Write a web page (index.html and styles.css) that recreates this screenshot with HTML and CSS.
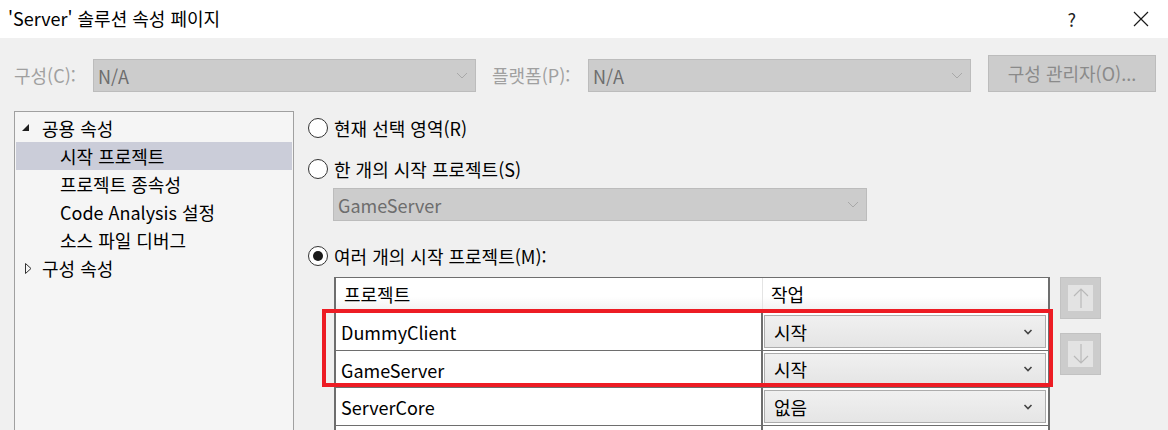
FILE: index.html
```html
<!DOCTYPE html>
<html lang="ko">
<head>
<meta charset="utf-8">
<title>'Server' 솔루션 속성 페이지</title>
<link rel="stylesheet" href="styles.css">
</head>
<body>
<div class="window">
  <div class="titlebar">
    <span class="title">'Server' 솔루션 속성 페이지</span>
    <span class="help">?</span>
    <span class="close"><svg width="16" height="16" viewBox="0 0 16 16"><path d="M1 1 L15 15 M15 1 L1 15" stroke="#1a1a1a" stroke-width="1.2" fill="none"/></svg></span>
  </div>
  <div class="body">
    <div class="configrow">
      <span class="lbl lbl-cfg">구성(C):</span>
      <div class="combo disabled wide"><span>N/A</span><svg class="chev" width="12" height="7" viewBox="0 0 12 7"><path d="M1 1 L6 6 L11 1" stroke="#a8a8a8" fill="none" stroke-width="1"/></svg></div>
      <span class="lbl lbl-plat">플랫폼(P):</span>
      <div class="combo disabled wide"><span>N/A</span><svg class="chev" width="12" height="7" viewBox="0 0 12 7"><path d="M1 1 L6 6 L11 1" stroke="#a8a8a8" fill="none" stroke-width="1"/></svg></div>
      <div class="btn disabled">구성 관리자(O)...</div>
    </div>
    <div class="content">
      <div class="tree">
        <div class="node"><span class="exp"><svg width="8" height="8" viewBox="0 0 8 8"><path d="M7 0 L7 7 L0 7 Z" fill="#1e1e1e"/></svg></span>공용 속성</div>
        <div class="node child sel">시작 프로젝트</div>
        <div class="node child">프로젝트 종속성</div>
        <div class="node child">Code Analysis 설정</div>
        <div class="node child">소스 파일 디버그</div>
        <div class="node"><span class="exp col"><svg width="7" height="11" viewBox="0 0 7 11"><path d="M0.5 0.5 L6 5.5 L0.5 10.5 Z" fill="none" stroke="#333" stroke-width="1"/></svg></span>구성 속성</div>
      </div>
      <div class="main">
        <label class="radio r1"><span class="circle"></span>현재 선택 영역(R)</label>
        <label class="radio r2"><span class="circle"></span>한 개의 시작 프로젝트(S)</label>
        <div class="combo disabled single"><span>GameServer</span><svg class="chev" width="12" height="7" viewBox="0 0 12 7"><path d="M1 1 L6 6 L11 1" stroke="#a8a8a8" fill="none" stroke-width="1"/></svg></div>
        <label class="radio r3"><span class="circle on"></span>여러 개의 시작 프로젝트(M):</label>
        <div class="tablewrap">
          <div class="grid">
            <div class="hdr c1">프로젝트</div>
            <div class="hdr c2">작업</div>
            <div class="cell c1">DummyClient</div>
            <div class="cell c2"><div class="dd">시작<svg class="chev" width="10" height="6" viewBox="0 0 10 6"><path d="M1.5 1 L5 4.5 L8.5 1" stroke="#444" fill="none" stroke-width="1.6"/></svg></div></div>
            <div class="cell c1">GameServer</div>
            <div class="cell c2"><div class="dd">시작<svg class="chev" width="10" height="6" viewBox="0 0 10 6"><path d="M1.5 1 L5 4.5 L8.5 1" stroke="#444" fill="none" stroke-width="1.6"/></svg></div></div>
            <div class="cell c1">ServerCore</div>
            <div class="cell c2"><div class="dd">없음<svg class="chev" width="10" height="6" viewBox="0 0 10 6"><path d="M1.5 1 L5 4.5 L8.5 1" stroke="#444" fill="none" stroke-width="1.6"/></svg></div></div>
            <div class="cell c1 empty"></div>
            <div class="cell c2 empty"></div>
            <div class="highlight"></div>
          </div>
          <div class="arrows">
            <div class="abtn"><span class="ainner"><svg width="16" height="22" viewBox="0 0 16 22"><path d="M8 2 L8 21 M1 9 L8 2 L15 9" stroke="#b9b9b9" fill="none" stroke-width="1.2"/></svg></span></div>
            <div class="abtn"><span class="ainner"><svg width="16" height="22" viewBox="0 0 16 22"><path d="M8 1 L8 20 M1 13 L8 20 L15 13" stroke="#b9b9b9" fill="none" stroke-width="1.2"/></svg></span></div>
          </div>
        </div>
      </div>
    </div>
  </div>
</div>
</body>
</html>
```
FILE: styles.css
```css
* { box-sizing: border-box; }
html, body { margin: 0; padding: 0; }
body {
  width: 1168px;
  height: 430px;
  overflow: hidden;
  background: #f0f0f0;
  font-family: "Noto Sans CJK KR", "Noto Sans", sans-serif;
  font-size: 18px;
  color: #000;
}
.window { width: 1168px; height: 430px; display: flex; flex-direction: column; overflow: hidden; }
.titlebar {
  flex: none;
  height: 38px;
  background: #fff;
  display: flex;
  align-items: center;
  padding-left: 8px;
}
.title { font-size: 18px; line-height: 24px; color: #000; margin-top: -2px; }
.help { margin-left: auto; font-size: 18px; color: #222; line-height: 20px; margin-right: 57px; }
.close { margin-right: 19px; display: flex; margin-top: -1px; }

.body { flex: 1; display: flex; flex-direction: column; min-height: 0; }
.configrow {
  flex: none;
  display: flex;
  align-items: flex-end;
  padding-left: 14px;
  margin-top: 17px;
  height: 37px;
}
.lbl { color: #a0a0a0; line-height: 33px; height: 33px; }
.lbl-cfg { width: 79px; }
.lbl-plat { width: 96px; margin-left: 16px; }
.combo {
  display: flex;
  align-items: center;
  height: 33px;
  background: #cccccc;
  border: 1px solid #bcbcbc;
  color: #6d6d6d;
  padding-left: 4px;
  padding-right: 7px;
  line-height: 20px;
}
.combo span { flex: 1; }
.combo.wide { width: 383px; }
.btn {
  margin-left: 17px;
  width: 168px;
  height: 37px;
  background: #cccccc;
  border: 1px solid #bcbcbc;
  color: #8a8a8a;
  display: flex;
  align-items: center;
  justify-content: center;
  padding-bottom: 1px;
}

.content { flex: none; display: flex; margin-top: 19px; height: 400px; }
.tree {
  width: 280px;
  margin-left: 14px;
  background: #f5f5f5;
  border: 1px solid #a0a0a0;
  border-bottom: none;
  padding: 2px 1px 0 1px;
  height: 400px;
}
.node {
  height: 28px;
  line-height: 28px;
  display: flex;
  align-items: center;
  padding-left: 26px;
  position: relative;
  white-space: nowrap;
}
.node.child { padding-left: 44px; }
.node.sel { background: #cbcdd9; }
.exp { position: absolute; left: 6px; top: 10px; display: flex; }
.exp.col { left: 9px; top: 9px; }

.main { flex: 1; padding-left: 14px; }
.radio {
  display: flex;
  align-items: center;
  height: 28px;
  line-height: 28px;
}
.radio.r1 { margin-top: 3px; }
.radio.r2 { margin-top: 13px; }
.radio.r3 { margin-top: 21px; }
.circle {
  width: 20px; height: 20px;
  border: 1px solid #333;
  border-radius: 50%;
  background: #fff;
  margin-right: 6px;
  position: relative;
  flex: none;
}
.circle.on::after {
  content: "";
  position: absolute;
  left: 4px; top: 4px;
  width: 10px; height: 10px;
  border-radius: 50%;
  background: #1a1a1a;
}
.combo.single { width: 534px; margin-left: 25px; margin-top: 5px; }

.tablewrap { display: flex; margin-left: 26px; margin-top: 7px; align-items: flex-start; }
.grid {
  position: relative;
  width: 716px;
  height: 200px;
  display: grid;
  grid-template-columns: 427px 1fr;
  grid-template-rows: 35px 38px 37px 38px 1fr;
  border: 2px solid #6e6e6e;
  border-top-width: 1px;
  background: #fff;
}
.hdr {
  background: linear-gradient(#ffffff, #ffffff 55%, #f0f0f0);
  line-height: 32px;
  padding-left: 8px;
  border-bottom: 1px solid #d8d8d8;
}
.hdr.c1 { border-right: 1px solid #e4e4e4; }
.cell {
  border-bottom: 1px solid #6e6e6e;
  line-height: 38px;
  padding-left: 5px;
}
.cell.c1 { border-right: 2px solid #6e6e6e; }
.cell.c2 { padding: 2px 2px 2px 1px; }
.cell.empty { border-bottom: none; }
.dd {
  height: 100%;
  border: 1px solid #acacac;
  background: linear-gradient(#f0f0f0, #e5e5e5);
  display: flex;
  align-items: center;
  padding-left: 9px;
  padding-right: 12px;
  justify-content: space-between;
  line-height: 20px;
}
.highlight {
  position: absolute;
  left: -14px;
  top: 31px;
  width: 731px;
  height: 78px;
  border: 4px solid #ed1c24;
  pointer-events: none;
}
.arrows { display: flex; flex-direction: column; gap: 14px; margin-left: 10px; }
.abtn {
  width: 41px; height: 42px;
  background: #cccccc;
  border: 1px solid #c2c2c2;
  display: flex; align-items: center; justify-content: center;
}
.ainner {
  width: 25px; height: 26px;
  background: #e3e3e3;
  display: flex; align-items: center; justify-content: center;
}
```
